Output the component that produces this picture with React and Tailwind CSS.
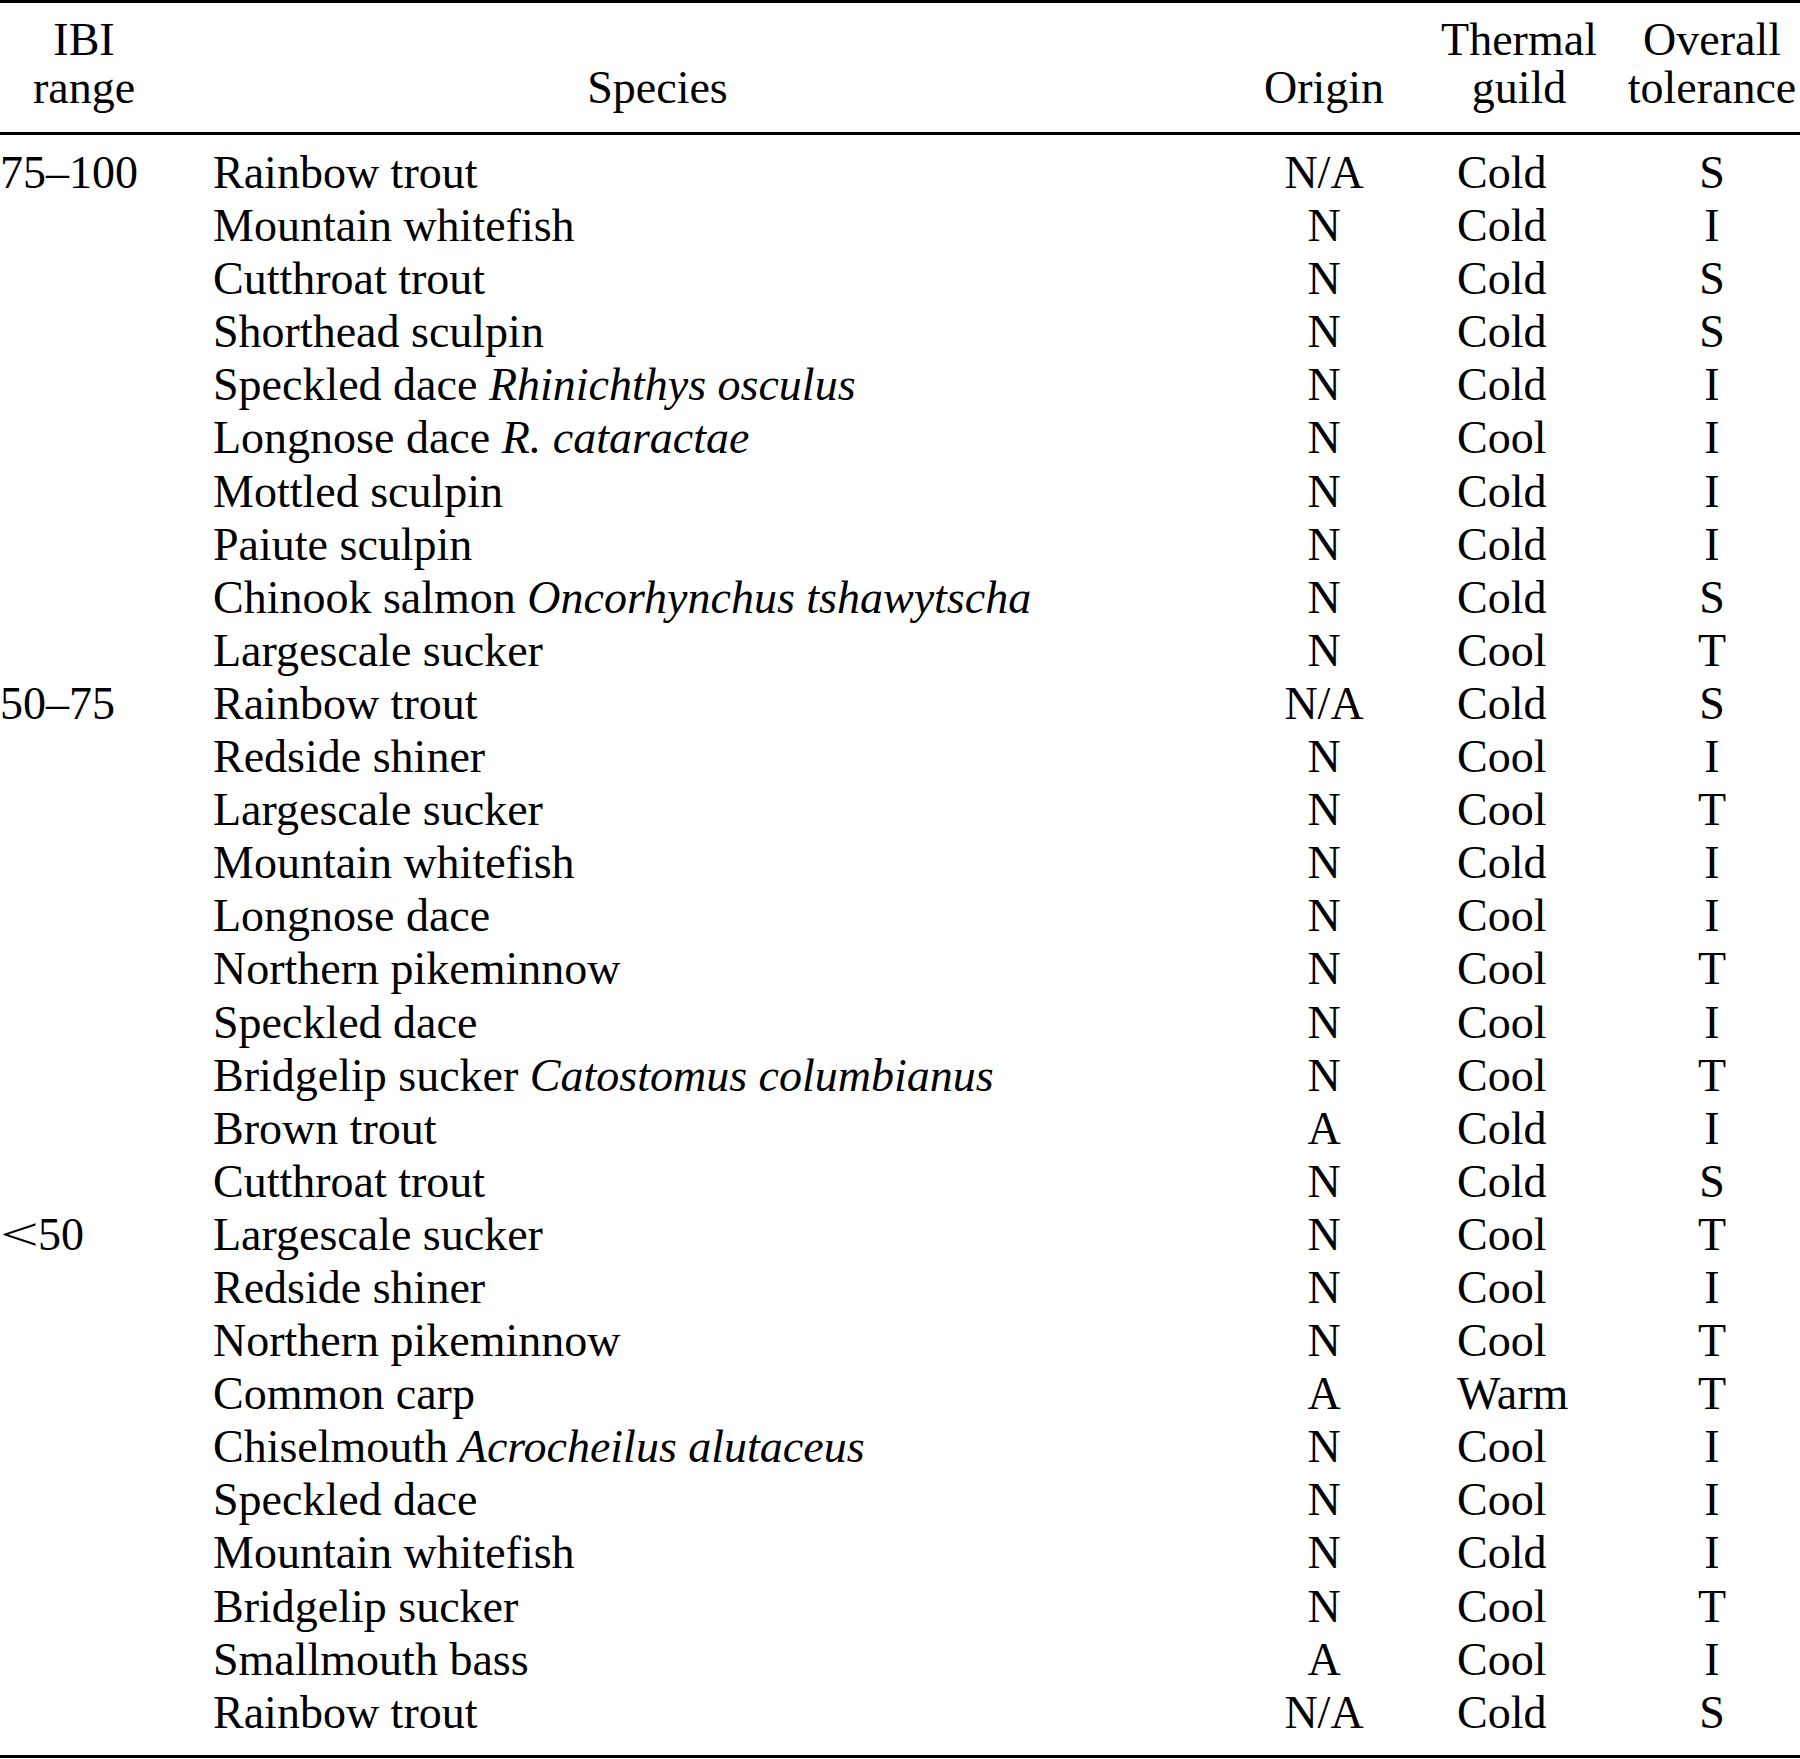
const rows = [
  ["75–100", "Rainbow trout", null, "N/A", "Cold", "S"],
  ["", "Mountain whitefish", null, "N", "Cold", "I"],
  ["", "Cutthroat trout", null, "N", "Cold", "S"],
  ["", "Shorthead sculpin", null, "N", "Cold", "S"],
  ["", "Speckled dace", "Rhinichthys osculus", "N", "Cold", "I"],
  ["", "Longnose dace", "R. cataractae", "N", "Cool", "I"],
  ["", "Mottled sculpin", null, "N", "Cold", "I"],
  ["", "Paiute sculpin", null, "N", "Cold", "I"],
  ["", "Chinook salmon", "Oncorhynchus tshawytscha", "N", "Cold", "S"],
  ["", "Largescale sucker", null, "N", "Cool", "T"],
  ["50–75", "Rainbow trout", null, "N/A", "Cold", "S"],
  ["", "Redside shiner", null, "N", "Cool", "I"],
  ["", "Largescale sucker", null, "N", "Cool", "T"],
  ["", "Mountain whitefish", null, "N", "Cold", "I"],
  ["", "Longnose dace", null, "N", "Cool", "I"],
  ["", "Northern pikeminnow", null, "N", "Cool", "T"],
  ["", "Speckled dace", null, "N", "Cool", "I"],
  ["", "Bridgelip sucker", "Catostomus columbianus", "N", "Cool", "T"],
  ["", "Brown trout", null, "A", "Cold", "I"],
  ["", "Cutthroat trout", null, "N", "Cold", "S"],
  ["<50", "Largescale sucker", null, "N", "Cool", "T"],
  ["", "Redside shiner", null, "N", "Cool", "I"],
  ["", "Northern pikeminnow", null, "N", "Cool", "T"],
  ["", "Common carp", null, "A", "Warm", "T"],
  ["", "Chiselmouth", "Acrocheilus alutaceus", "N", "Cool", "I"],
  ["", "Speckled dace", null, "N", "Cool", "I"],
  ["", "Mountain whitefish", null, "N", "Cold", "I"],
  ["", "Bridgelip sucker", null, "N", "Cool", "T"],
  ["", "Smallmouth bass", null, "A", "Cool", "I"],
  ["", "Rainbow trout", null, "N/A", "Cold", "S"],
];

const grid = "grid grid-cols-[213px_1011px_200px_200px_176px]";

function Range({ value }) {
  // the "<" in the source is a wider math sign
  if (value.startsWith("<")) {
    return (
      <>
        <span className="inline-block scale-x-[1.5] origin-left mr-[12px]">&lt;</span>
        {value.slice(1)}
      </>
    );
  }
  return value;
}

export default function App() {
  return (
    <div
      className="w-[1800px] bg-white text-black text-[46px]"
      style={{ fontFamily: '"Liberation Serif", "Times New Roman", serif' }}
    >
      <div className="h-[3px] bg-black" />

      <div className={`${grid} items-end pt-[13px] pb-[20px] leading-[48px]`}>
        <div className="w-[168px] text-center">
          IBI
          <br />
          range
        </div>
        <div className="w-[889px] text-center">Species</div>
        <div className="text-center">Origin</div>
        <div className="text-center pr-[10px]">
          Thermal
          <br />
          guild
        </div>
        <div className="text-center whitespace-nowrap">
          Overall
          <br />
          tolerance
        </div>
      </div>

      <div className="h-[3px] bg-black" />

      <div className="pt-[11px] pb-[16px]">
        {rows.map((r, i) => (
          <div key={i} className={`${grid} h-[53.1px] leading-[53.1px] whitespace-nowrap`}>
            <div>
              <Range value={r[0]} />
            </div>
            <div>
              {r[1]}
              {r[2] && <span className="italic"> {r[2]}</span>}
            </div>
            <div className="text-center">{r[3]}</div>
            <div className="pl-[33px]">{r[4]}</div>
            <div className="text-center">{r[5]}</div>
          </div>
        ))}
      </div>

      <div className="h-[3px] bg-black" />
    </div>
  );
}
